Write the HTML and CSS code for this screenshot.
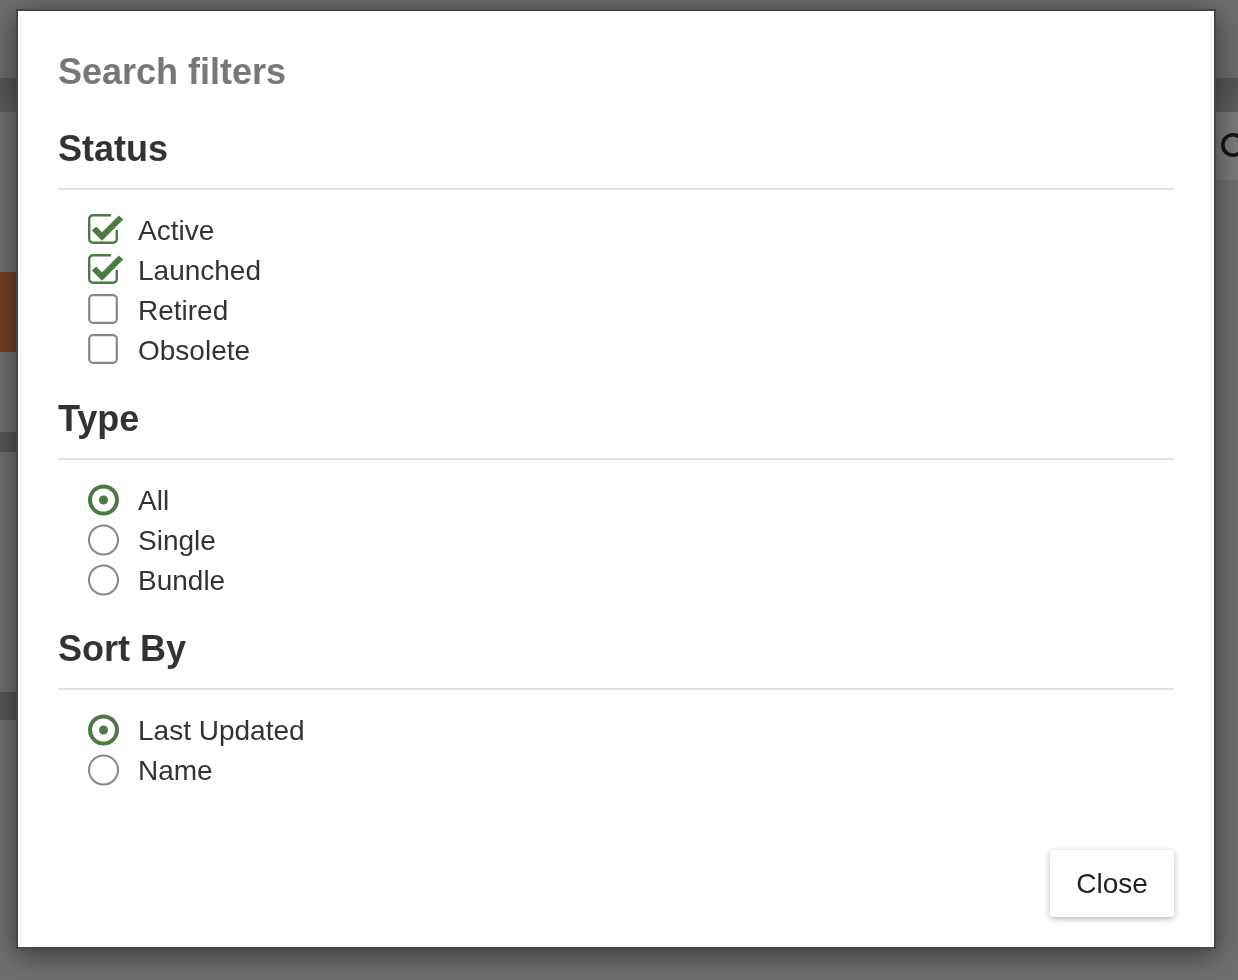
FILE: index.html
```html
<!DOCTYPE html>
<html lang="en">
<head>
<meta charset="utf-8">
<title>Search filters</title>
<link rel="stylesheet" href="styles.css">
</head>
<body>
<div class="page">
  <header class="topbar"></header>
  <div class="navband"></div>
  <div class="toolbar">
    <div class="toolbar-search">
      <svg class="search-icon" viewBox="0 0 26 26" width="26" height="26"><circle cx="13" cy="13" r="10.2" fill="none" stroke="#151515" stroke-width="3.6"/></svg>
    </div>
  </div>
  <main class="content">
    <div class="card card-accent"></div>
    <div class="card card-dark card-one"></div>
    <div class="card card-dark card-two"></div>
  </main>
</div>

<div class="modal" role="dialog" aria-labelledby="modal-title">
  <h1 class="modal-title" id="modal-title">Search filters</h1>

  <section class="filter-group first">
    <h2 class="group-title">Status</h2>
    <ul class="options">
      <li class="option">
        <svg class="icon" viewBox="0 0 32 32"><path class="box-on" d="M23 1.2H5A3.8 3.8 0 0 0 1.2 5V25A3.8 3.8 0 0 0 5 28.8H25A3.8 3.8 0 0 0 28.8 25V16"/><polyline class="tick" points="6,14.5 14,22.5 33,3.5"/></svg>
        <span>Active</span>
      </li>
      <li class="option">
        <svg class="icon" viewBox="0 0 32 32"><path class="box-on" d="M23 1.2H5A3.8 3.8 0 0 0 1.2 5V25A3.8 3.8 0 0 0 5 28.8H25A3.8 3.8 0 0 0 28.8 25V16"/><polyline class="tick" points="6,14.5 14,22.5 33,3.5"/></svg>
        <span>Launched</span>
      </li>
      <li class="option">
        <svg class="icon" viewBox="0 0 32 32"><rect class="box-off" x="1.2" y="1.2" width="27.6" height="27.6" rx="3.8"/></svg>
        <span>Retired</span>
      </li>
      <li class="option">
        <svg class="icon" viewBox="0 0 32 32"><rect class="box-off" x="1.2" y="1.2" width="27.6" height="27.6" rx="3.8"/></svg>
        <span>Obsolete</span>
      </li>
    </ul>
  </section>

  <section class="filter-group">
    <h2 class="group-title">Type</h2>
    <ul class="options">
      <li class="option">
        <svg class="icon" viewBox="0 0 32 32"><circle class="radio-on" cx="15.5" cy="16" r="13.5"/><circle class="dot" cx="15.5" cy="16" r="4.5"/></svg>
        <span>All</span>
      </li>
      <li class="option">
        <svg class="icon" viewBox="0 0 32 32"><circle class="radio-off" cx="15.5" cy="16" r="14.5"/></svg>
        <span>Single</span>
      </li>
      <li class="option">
        <svg class="icon" viewBox="0 0 32 32"><circle class="radio-off" cx="15.5" cy="16" r="14.5"/></svg>
        <span>Bundle</span>
      </li>
    </ul>
  </section>

  <section class="filter-group">
    <h2 class="group-title">Sort By</h2>
    <ul class="options">
      <li class="option">
        <svg class="icon" viewBox="0 0 32 32"><circle class="radio-on" cx="15.5" cy="16" r="13.5"/><circle class="dot" cx="15.5" cy="16" r="4.5"/></svg>
        <span>Last Updated</span>
      </li>
      <li class="option">
        <svg class="icon" viewBox="0 0 32 32"><circle class="radio-off" cx="15.5" cy="16" r="14.5"/></svg>
        <span>Name</span>
      </li>
    </ul>
  </section>

  <div class="modal-footer">
    <button class="btn-close" type="button">Close</button>
  </div>
</div>
</body>
</html>
```

FILE: styles.css
```css
html, body {
  margin: 0;
  padding: 0;
  height: 100%;
}

body {
  background: #6f7072;
  font-family: "Liberation Sans", Arial, Helvetica, sans-serif;
  overflow: hidden;
}

.page {
  display: flex;
  flex-direction: column;
  height: 980px;
}

.topbar {
  height: 78px;
  background: #6e6e6e;
}

.navband {
  height: 34px;
  background: linear-gradient(#545656, #5f6060);
}

.toolbar {
  height: 68px;
  background: #707070;
  display: flex;
  justify-content: flex-end;
}

.toolbar-search {
  width: 20px;
  background: #7b7b7b;
  display: flex;
  align-items: center;
  padding-left: 2px;
  overflow: hidden;
}

.search-icon {
  display: block;
  flex: none;
  width: 26px;
  height: 26px;
  margin-left: 2px;
  margin-top: -2px;
}

.content {
  flex: 1;
  display: flex;
  flex-direction: column;
  align-items: flex-start;
  background: #707070;
}

.card {
  width: 600px;
}

.card-accent {
  margin-top: 92px;
  height: 80px;
  background: #763f21;
}

.card-dark {
  height: 20px;
  background: #565858;
}

.card-one {
  margin-top: 80px;
}

.card-two {
  margin-top: 240px;
  height: 28px;
}

/* Modal */
.modal {
  position: fixed;
  left: 16px;
  top: 9px;
  width: 1116px;
  height: 865px;
  padding: 41px 40px 30px 40px;
  background: #fff;
  border: 2px solid #474747;
  box-shadow: 0 6px 28px rgba(0, 0, 0, 0.5);
  display: flex;
  flex-direction: column;
}

.modal-title {
  margin: 0;
  font-size: 36px;
  line-height: 40px;
  font-weight: 700;
  color: #777;
}

.filter-group {
  margin-top: 29px;
}

.filter-group.first {
  margin-top: 37px;
}

.group-title {
  margin: 0;
  font-size: 36px;
  line-height: 40px;
  font-weight: 700;
  color: #333;
  padding-bottom: 19px;
  border-bottom: 2px solid #e2e2e2;
}

.options {
  list-style: none;
  margin: 20px 0 0 0;
  padding: 0 0 0 30px;
}

.option {
  display: flex;
  align-items: center;
  height: 40px;
  font-size: 28px;
  color: #333;
}

.option span {
  padding-top: 2px;
}

.icon {
  width: 32px;
  height: 32px;
  margin-right: 18px;
  overflow: visible;
  flex: none;
}

.box-on {
  fill: none;
  stroke: #4b7a43;
  stroke-width: 2.4;
}

.tick {
  fill: none;
  stroke: #4b7a43;
  stroke-width: 6;
  stroke-linejoin: miter;
}

.box-off {
  fill: none;
  stroke: #878787;
  stroke-width: 2.2;
}

.radio-on {
  fill: none;
  stroke: #4b7a43;
  stroke-width: 4;
}

.dot {
  fill: #4b7a43;
}

.radio-off {
  fill: none;
  stroke: #878787;
  stroke-width: 2;
}

.modal-footer {
  margin-top: auto;
  display: flex;
  justify-content: flex-end;
}

.btn-close {
  width: 124px;
  height: 67px;
  border: none;
  border-radius: 4px;
  background: #fff;
  box-shadow: 0 2px 6px rgba(0, 0, 0, 0.28);
  font-family: "Liberation Sans", Arial, Helvetica, sans-serif;
  font-size: 28px;
  color: #222;
  padding: 0;
}
```
